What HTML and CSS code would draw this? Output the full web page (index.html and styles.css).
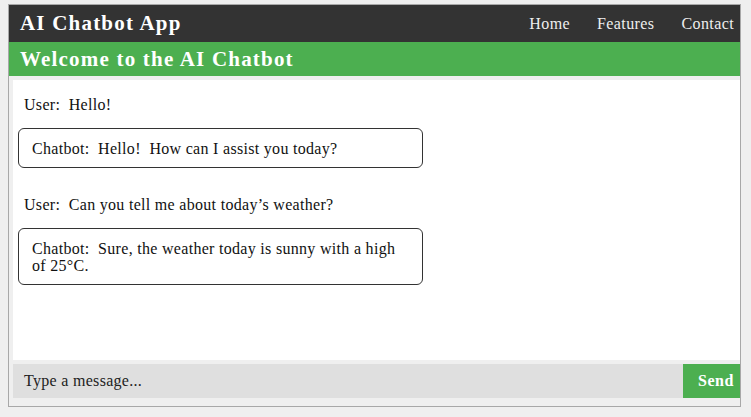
FILE: index.html
```html
<!DOCTYPE html>
<html lang="en">
<head>
<meta charset="utf-8">
<title>AI Chatbot App</title>
<link rel="stylesheet" href="styles.css">
</head>
<body>
<div class="app">
  <header class="topbar">
    <div class="brand">AI Chatbot App</div>
    <nav class="nav">
      <a href="#">Home</a>
      <a href="#">Features</a>
      <a href="#">Contact</a>
    </nav>
  </header>
  <div class="welcome">Welcome to the AI Chatbot</div>
  <main class="main">
    <section class="chat">
      <div class="msg user">User:&nbsp; Hello!</div>
      <div class="msg bot">Chatbot:&nbsp; Hello!&nbsp; How can I assist you today?</div>
      <div class="msg user">User:&nbsp; Can you tell me about today’s weather?</div>
      <div class="msg bot">Chatbot:&nbsp; Sure, the weather today is sunny with a high of 25°C.</div>
    </section>
    <div class="composer">
      <div class="input">Type a message...</div>
      <button class="send">Send</button>
    </div>
  </main>
</div>
</body>
</html>
```
FILE: styles.css
```css
* { box-sizing: border-box; }
html, body { background: #efefef; }
body {
  margin: 4px 8px;
  font-family: "Liberation Serif", "Times New Roman", serif;
  font-size: 16px;
  color: #111;
}
.app {
  width: 733px;
  height: 403px;
  border: 1px solid #a8a8a8;
  display: flex;
  flex-direction: column;
  background: #efefef;
  overflow: hidden;
}
.topbar {
  height: 37px;
  flex: none;
  background: #333333;
  display: flex;
  align-items: center;
  justify-content: space-between;
  padding: 0 6px 0 11px;
}
.brand {
  color: #fff;
  font-weight: bold;
  font-size: 21px;
  letter-spacing: 1.2px;
}
.nav { display: flex; gap: 27px; }
.nav a {
  color: #eeeeee;
  text-decoration: none;
  font-size: 16px;
  letter-spacing: 0.4px;
}
.welcome {
  height: 34px;
  flex: none;
  background: #4caf50;
  color: #fff;
  font-weight: bold;
  font-size: 21px;
  letter-spacing: 1.2px;
  display: flex;
  align-items: center;
  padding-left: 11px;
}
.main {
  flex: 1;
  display: flex;
  flex-direction: column;
  padding: 4px 0 8px 4px;
}
.chat {
  flex: 1;
  background: #fff;
  padding: 16px 5px 0;
}
.msg {
  line-height: 17px;
  letter-spacing: 0.3px;
}
.user {
  padding-left: 6px;
  margin-bottom: 15px;
}
.bot {
  width: 405px;
  border: 1px solid #333;
  border-radius: 6px;
  padding: 11px 13px 10px;
  margin-bottom: 28px;
}
.composer {
  height: 34px;
  flex: none;
  margin-top: 4px;
  display: flex;
}
.input {
  flex: 1;
  background: #dfdfdf;
  display: flex;
  align-items: center;
  padding-left: 11px;
  color: #222;
  letter-spacing: 0.3px;
}
.send {
  width: 57px;
  border: none;
  background: #4caf50;
  color: #fff;
  font-family: inherit;
  font-weight: bold;
  font-size: 16px;
  letter-spacing: 0.5px;
  text-align: left;
  padding: 0 0 0 15px;
}
```
